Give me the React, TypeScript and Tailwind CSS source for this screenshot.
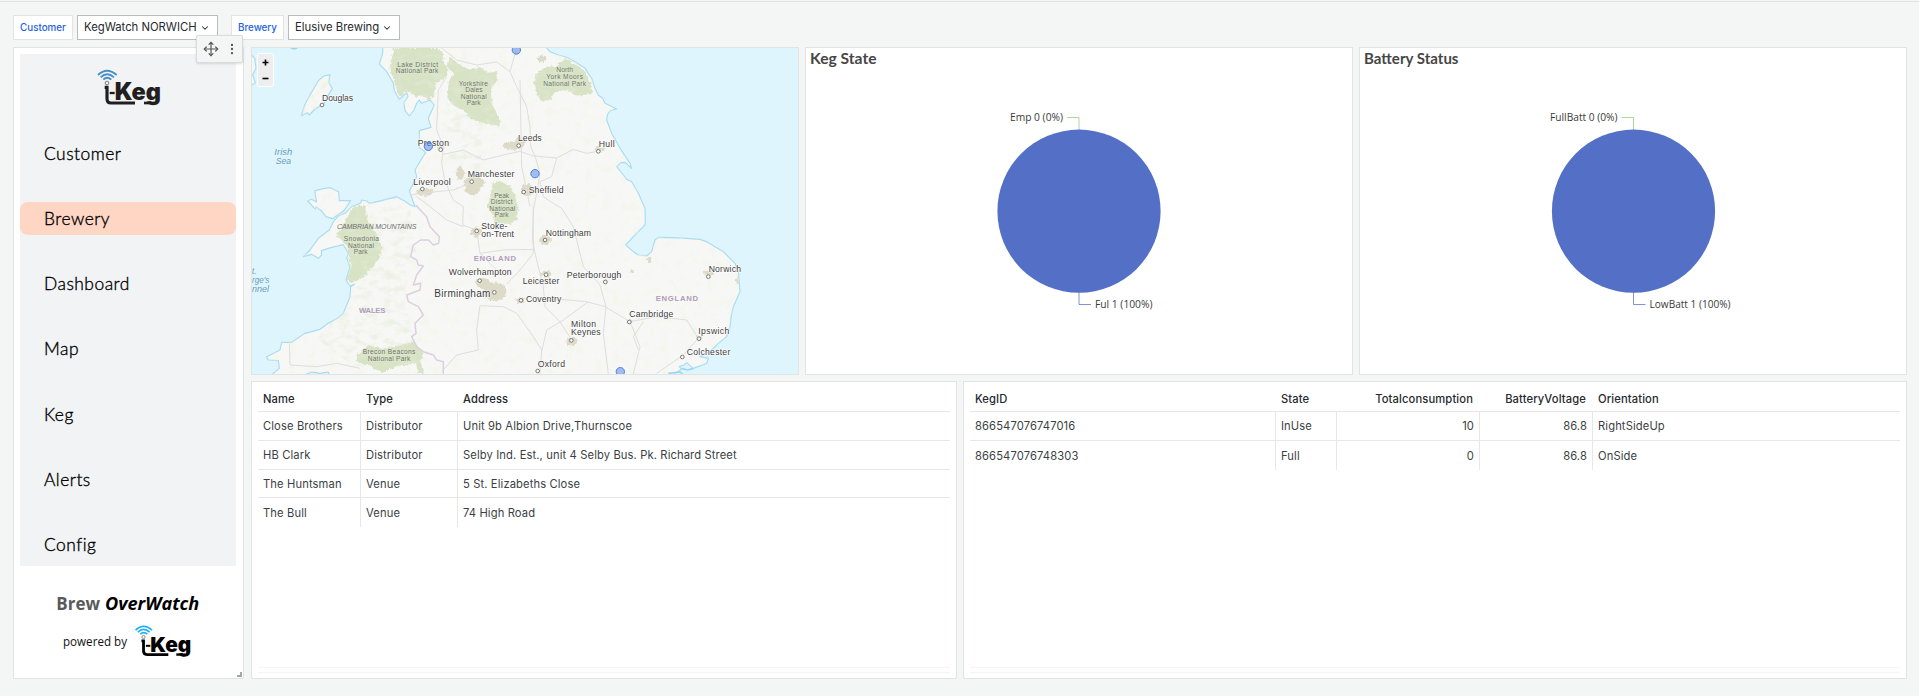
import React from "react";
import { ChevronDown, Move, EllipsisVertical } from "lucide-react";

const GOTHIC = "font-['Century_Gothic','URW_Gothic',Lato,sans-serif]";

function KegLogo({ wave, ink, className }: { wave: string; ink: string; className: string }) {
  return (
    <svg viewBox="290 207 192 108" className={className} preserveAspectRatio="none" aria-label="i-Keg">
      <g fill="none" stroke={wave} strokeWidth="5.5">
        <path d="M293 225Q320 199 349 225" />
        <path d="M301 232Q320 213 341 232" />
        <path d="M309 239Q320 228 333 239" />
      </g>
      <circle cx="320" cy="249" r="5.5" fill="none" stroke="#666" strokeWidth="2.5" />
      <path d="M313 262H320V296Q320 309 332 309H404" fill="none" stroke={ink} strokeWidth="9.5" />
      <path d="M328 279H343" stroke={ink} strokeWidth="7" />
      <text x="343" y="299" fontSize="71" fontWeight="900" fill={ink} fontFamily="Inter, sans-serif" textLength="139" lengthAdjust="spacingAndGlyphs">
        Keg
      </text>
      <path d="M431 309H462" stroke={ink} strokeWidth="8" />
    </svg>
  );
}

const NAV = ["Customer", "Brewery", "Dashboard", "Map", "Keg", "Alerts", "Config"];

function Sidebar() {
  return (
    <aside className="relative flex w-[231px] shrink-0 flex-col border border-[#e2e4e4] bg-white px-[6px] pt-[6px]">
      <nav className="flex h-[512px] w-[216px] flex-col bg-[#f1f3f5]">
        <div className="flex h-[83px] shrink-0 pl-[77px] pt-[15px]">
          <KegLogo wave="#4a90c4" ink="#231f20" className="h-[36px] w-[64px] overflow-visible" />
        </div>
        <div className="flex flex-col gap-[32.2px]">
          {NAV.map((n) => (
            <a
              key={n}
              className={`flex h-[33px] items-center pl-[24px] text-[17.4px] leading-none font-light tracking-[0.5px] text-black [-webkit-text-stroke:0.35px_black] ${GOTHIC} ${
                n === "Brewery" ? "rounded-[8px] bg-[#ffd5c4]" : ""
              }`}
            >
              {n}
            </a>
          ))}
        </div>
      </nav>
      <svg viewBox="150 368 450 200" className="mt-[27px] ml-[30px] h-[67px] w-[150px] shrink-0 overflow-visible" preserveAspectRatio="none">
        <g fontFamily="'Open Sans', sans-serif">
          <text x="169" y="420" fontSize="54" fontWeight="700" fill="#58595b" textLength="131" lengthAdjust="spacingAndGlyphs">
            Brew
          </text>
          <text x="315" y="420" fontSize="54" fontWeight="700" fontStyle="italic" fill="#000" textLength="283" lengthAdjust="spacingAndGlyphs">
            OverWatch
          </text>
          <text x="189" y="526" fontSize="38" fill="#111" textLength="192" lengthAdjust="spacingAndGlyphs">
            powered by
          </text>
        </g>
        <svg x="404" y="463" width="170" height="94" overflow="visible">
          <KegLogo wave="#1cb0f6" ink="#000" className="h-full w-full overflow-visible" />
        </svg>
      </svg>
      <svg viewBox="0 0 5 5" className="absolute right-[1px] bottom-[1px] h-[5px] w-[5px]">
        <path d="M5 0V5H0V3H3V0Z" fill="#a3a5a7" />
      </svg>
      <div className="absolute -top-[13px] right-0 flex h-[28px] w-[47px] items-center rounded-[2px] border border-[#d9dbdc] bg-[#f4f5f5] pl-[6px] text-[#55585d] shadow-sm">
        <Move size={16} strokeWidth={1.8} className="shrink-0" />
        <EllipsisVertical size={14} strokeWidth={2} className="ml-[6px] shrink-0" />
      </div>
    </aside>
  );
}

const COAST =
  "M398 10L398 40L388 72L410 95L430 130L433 152L448 178L462 165L470 158L474 170L462 188L465 212L478 228L492 210L500 190L508 180L515 190L540 180L553 195L545 212L535 235L543 262L508 272L508 322L527 338L520 348L495 390L500 410L485 440L478 452L487 478L495 500L480 494L462 482L440 470L395 482L358 490L350 483L335 480L332 489L305 500L285 520L265 528L250 545L238 570L205 595L180 630L160 650L185 643L205 655L215 645L214 632L245 622L280 614L295 640L290 655L300 680L288 720L300 738L314 733L302 740L300 770L280 820L262 835L235 850L210 868L165 880L125 907L95 907L90 930L50 950L55 960L85 962L88 985L70 1000L65 1020L1270 1020L1275 1000L1295 988L1288 980L1302 975L1310 968L1330 985L1370 970L1375 955L1350 950L1385 930L1405 910L1430 890L1440 860L1445 820L1450 800L1470 755L1465 695L1455 670L1420 635L1370 605L1350 598L1310 595L1260 593L1225 592L1215 600L1205 635L1190 648L1165 645L1150 635L1127 615L1150 590L1185 555L1186 540L1185 505L1165 460L1145 425L1130 418L1120 405L1100 380L1112 368L1125 367L1145 385L1140 370L1110 325L1085 280L1070 240L1072 225L1080 212L1100 207L1065 190L1058 175L1045 165L1035 145L1025 115L1005 85L980 68L950 52L925 45L900 35L878 10Z";
const ANGLESEY = "M195 452L220 446L240 443L266 455L268 482L302 482L282 512L262 525L248 536L228 530L214 512L198 500L196 507L184 495L173 483L184 478L200 486L196 465Z";
const MAN = "M240 104L236 128L247 145L232 170L222 190L192 210L178 225L172 218L154 227L166 190L190 148L205 122L222 108Z";

const PARKS = [
  "M432 24L560 24L582 40L580 62L595 95L582 115L558 130L552 168L532 178L515 165L500 170L470 150L450 172L440 150L432 120L418 85Z",
  "M600 52L640 80L652 90L690 82L720 100L742 92L740 120L722 150L725 190L750 240L748 258L712 252L670 240L640 212L608 195L592 170L596 125L612 100L588 78Z",
  "M890 78L920 80L945 55L978 74L1000 88L1022 130L1028 160L985 168L950 150L915 155L900 180L872 182L862 160L850 130L858 105Z",
  "M728 430L750 422L782 440L795 465L806 500L800 540L780 552L735 550L728 525L712 500L720 470Z",
  "M310 500L345 495L352 540L372 565L385 600L398 625L385 660L360 690L340 712L300 730L290 715L302 680L292 620L270 595L258 590Z",
  "M322 945L355 915L400 928L440 918L490 905L520 940L512 965L520 1002L505 998L498 970L440 978L395 998L355 975L320 965Z",
];

const URBAN: [number, number, number, number][] = [
  [788, 317, 30, 12], [812, 305, 16, 12], [672, 428, 32, 20], [630, 400, 12, 20], [668, 450, 22, 14], [525, 455, 26, 12],
  [876, 56, 13, 10], [1050, 327, 16, 7], [832, 450, 20, 18], [678, 575, 16, 16], [885, 600, 18, 14], [888, 702, 16, 10],
  [735, 755, 34, 28], [700, 730, 22, 16], [811, 780, 12, 10], [965, 905, 16, 12], [1375, 700, 14, 8], [1462, 720, 4, 14],
  [1347, 893, 10, 8], [1198, 660, 7, 9], [1138, 845, 9, 6], [1147, 694, 5, 5], [1066, 724, 8, 6], [572, 325, 10, 7],
];

const ROADS = [
  "M575 24L620 60L680 75L740 66L780 95L800 24",
  "M780 95L800 140L830 200L840 260L842 320L855 348L870 400L862 450L850 510L847 600L860 660L880 740L885 800L930 845L965 900",
  "M590 110L565 150L562 220L560 270L580 320L575 370L585 425L610 480L640 500L638 555L680 570L690 640L740 690",
  "M580 343L640 330L700 360L760 345L810 334L850 348L920 354L970 328L1010 340L1048 333",
  "M920 354L905 410L870 425L880 470L910 490L935 505",
  "M810 120L815 380L830 450L840 500",
  "M430 475L500 462L560 455L610 450L660 430",
  "M500 470L540 500L590 540L640 560",
  "M770 732L810 690L850 640L850 500",
  "M690 640L760 630L850 628",
  "M690 797L680 870L685 930L620 945L575 995",
  "M690 797L760 800L800 820L850 890L875 930L870 1002",
  "M885 782L930 778L1010 785L1065 800L1140 845L1170 920L1150 1002",
  "M935 505L970 560L1000 680L1050 735L1068 800L1060 880L1075 1002",
  "M1015 785L940 840L890 870L875 935",
  "M1140 845L1220 830L1310 840L1345 895L1300 945L1220 1000",
  "M1180 845L1150 890L1165 930",
  "M118 910L120 975L200 980L260 970L330 985",
];

// name, text x, baseline, width, font size, ring x, ring y
const PLACES: [string, number, number, number, number, number, number][] = [
  ["Douglas", 216, 183, 93, 26, 216, 195],
  ["Preston", 503, 318, 94, 26, 572, 329],
  ["Leeds", 804, 304, 71, 26, 806, 317],
  ["Hull", 1046, 321, 48, 26, 1045, 334],
  ["Manchester", 653, 410, 140, 26, 665, 425],
  ["Liverpool", 490, 434, 112, 26, 517, 447],
  ["Sheffield", 836, 458, 105, 26, 821, 456],
  ["Stoke-", 694, 566, 78, 26, 680, 573],
  ["on-Trent", 694, 591, 98, 26, 0, 0],
  ["Nottingham", 887, 588, 136, 26, 885, 600],
  ["Wolverhampton", 596, 706, 189, 26, 689, 722],
  ["Birmingham", 553, 770, 168, 30, 733, 757],
  ["Leicester", 818, 731, 110, 26, 888, 704],
  ["Coventry", 828, 786, 106, 26, 813, 781],
  ["Peterborough", 950, 713, 164, 26, 1066, 726],
  ["Norwich", 1376, 695, 97, 26, 1375, 710],
  ["Cambridge", 1138, 832, 132, 26, 1138, 846],
  ["Milton", 963, 861, 75, 26, 0, 0],
  ["Keynes", 963, 886, 89, 26, 964, 901],
  ["Ipswich", 1345, 881, 93, 26, 1347, 896],
  ["Colchester", 1310, 945, 131, 26, 1297, 951],
  ["Oxford", 863, 980, 82, 26, 863, 993],
];

const PARK_LABELS: [string, number, number, number][] = [
  ["Lake District", 503, 82, 122], ["National Park", 501, 99, 128],
  ["Yorkshire", 670, 139, 88], ["Dales", 672, 157, 52], ["National", 671, 177, 78], ["Park", 671, 196, 42],
  ["North", 944, 97, 50], ["York Moors", 944, 117, 110], ["National Park", 944, 137, 128],
  ["Peak", 755, 474, 44], ["District", 755, 493, 66], ["National", 757, 513, 78], ["Park", 755, 532, 42],
  ["Snowdonia", 334, 603, 106], ["National", 333, 623, 78], ["Park", 332, 642, 42],
  ["Brecon Beacons", 417, 943, 158], ["National Park", 417, 962, 128],
];

const WATER_LABELS: [string, number, number, number][] = [
  ["Irish", 73, 346, 54], ["Sea", 77, 372, 46], ["t.", 6, 701, 13], ["rge's", 6, 728, 52], ["nnel", 6, 757, 51],
];

const MARKERS: [number, number][] = [[799, 30], [535, 319], [855, 401], [1111, 995]];

function MapPanel() {
  return (
    <section className="relative border border-[#e2e4e4] bg-[#dff5fe]">
      <svg viewBox="6 24 1638 978" className="block h-full w-full" preserveAspectRatio="none" fontFamily="'Liberation Sans', Arial, sans-serif">
        <defs>
          <clipPath id="land">
            <path d={COAST} />
            <path d={ANGLESEY} />
            <path d={MAN} />
          </clipPath>
          <filter id="terrain" x="0" y="0" width="100%" height="100%">
            <feTurbulence type="fractalNoise" baseFrequency="0.035" numOctaves="3" seed="8" />
            <feColorMatrix values="0 0 0 0 0.89  0 0 0 0 0.92  0 0 0 0 0.82  4 0 0 0 -2.15" />
          </filter>
          <filter id="relief" x="0" y="0" width="100%" height="100%">
            <feTurbulence type="fractalNoise" baseFrequency="0.03 0.05" numOctaves="3" seed="3" />
            <feColorMatrix values="0 0 0 0 0.76  0 0 0 0 0.82  0 0 0 0 0.66  0 3.6 0 0 -1.75" />
          </filter>
          <filter id="rough" x="-10%" y="-10%" width="120%" height="120%">
            <feTurbulence type="fractalNoise" baseFrequency="0.12" numOctaves="2" seed="5" />
            <feDisplacementMap in="SourceGraphic" scale="14" xChannelSelector="R" yChannelSelector="G" />
          </filter>
          <clipPath id="hills">
            <path d="M300 495L480 500L500 640L460 770L500 920L480 990L320 985L200 900L300 780L290 640Z" />
            {PARKS.map((d) => (
              <path key={d} d={d} />
            ))}
            <path d={MAN} />
            <path d="M590 190L700 250L690 400L610 400L580 280Z" />
          </clipPath>
        </defs>
        <g stroke="#a9dcf0" strokeWidth="3.5" fill="#f7f7f5" strokeLinejoin="round">
          <path d={COAST} />
          <path d={ANGLESEY} />
          <path d={MAN} />
          <path d="M0 40L14 55L18 85L8 105L16 128L4 136L0 136Z" />
        </g>
        <g clipPath="url(#land)">
          <rect x="0" y="0" width="1650" height="1010" filter="url(#terrain)" opacity="0.7" />
          <g fill="#d8e3c6" filter="url(#rough)">
            {PARKS.map((d) => (
              <path key={d} d={d} />
            ))}
          </g>
          <g clipPath="url(#hills)">
            <rect x="0" y="0" width="1650" height="1010" filter="url(#relief)" opacity="0.45" />
          </g>
          <g fill="#dedac8" filter="url(#rough)">
            {URBAN.map(([x, y, rx, ry], i) => (
              <ellipse key={i} cx={x} cy={y} rx={rx} ry={ry} />
            ))}
          </g>
          <g fill="none" stroke="#dfdddd" strokeWidth="3" strokeLinejoin="round">
            {ROADS.map((d) => (
              <path key={d} d={d} />
            ))}
          </g>
          <path
            d="M497 495L530 530L540 560L568 590L566 610L550 615L535 600L512 600L490 615L482 650L500 660L505 675L520 678L500 705L490 735L512 730L510 750L470 765L475 785L505 800L520 825L495 850L498 880L485 890L500 920L520 935L550 945L560 960L580 965L580 1002"
            fill="none"
            stroke="#dccfe0"
            strokeWidth="4.5"
            strokeLinejoin="round"
          />
        </g>
        <path d="M165 1004L185 996L210 1000L235 996L238 1004Z" fill="#dff5fe" stroke="#9bd6ee" strokeWidth="3" />
        <path d="M1255 1000L1290 996L1300 1004M1295 985L1312 990L1330 986" fill="none" stroke="#9bd6ee" strokeWidth="5" />
        <path d="M122 24L133 27L142 24" fill="none" stroke="#9bd6ee" strokeWidth="4" />
        <g fontSize="20" fill="#66705c" textAnchor="middle" stroke="#e7eddc" strokeWidth="1.5" paintOrder="stroke">
          {PARK_LABELS.map(([t, x, y, w], i) => (
            <text key={i} x={x} y={y} textLength={w}>
              {t}
            </text>
          ))}
        </g>
        <g fontSize="25" fontStyle="italic" fill="#6a9dbb">
          {WATER_LABELS.map(([t, x, y, w]) => (
            <text key={t} x={x} y={y} textLength={w} lengthAdjust="spacingAndGlyphs">
              {t}
            </text>
          ))}
        </g>
        <text x="261" y="566" fontSize="21" fontStyle="italic" fill="#717171" textLength="238">CAMBRIAN MOUNTAINS</text>
        <g fontSize="23" fontWeight="700" fill="#b09cba">
          <text x="671" y="664" textLength="127">ENGLAND</text>
          <text x="1217" y="783" textLength="127">ENGLAND</text>
          <text x="327" y="819" textLength="79">WALES</text>
        </g>
        <g fill="#3a3a3a" stroke="#fff" strokeWidth="3" paintOrder="stroke">
          {PLACES.map(([t, x, y, w, s]) => (
            <text key={t} x={x} y={y} fontSize={s} textLength={w}>
              {t}
            </text>
          ))}
        </g>
        <g fill="#fff" stroke="#777" strokeWidth="3">
          {PLACES.filter((p) => p[5] > 0).map((p) => (
            <circle key={p[0]} cx={p[5]} cy={p[6]} r="5.5" />
          ))}
        </g>
        <g fill="#5b8ee6" fillOpacity="0.55" stroke="#4a7fe0" strokeWidth="3">
          {MARKERS.map(([x, y]) => (
            <circle key={x} cx={x} cy={y} r="12.5" />
          ))}
        </g>
      </svg>
      <div className="absolute top-[5px] left-[5px] flex h-[34px] w-[17px] flex-col items-center justify-around rounded-[2px] border border-white bg-[#eee] text-black">
        <svg viewBox="0 0 7 7" className="size-[7px]">
          <path d="M3.5 0.5V6.5M0.5 3.5H6.5" stroke="currentColor" strokeWidth="1.6" />
        </svg>
        <svg viewBox="0 0 7 7" className="size-[7px]">
          <path d="M0.5 3.5H6.5" stroke="currentColor" strokeWidth="1.6" />
        </svg>
      </div>
    </section>
  );
}

type PieProps = { title: string; titleWidth: number; cx: number; top: string; topWidth: number; bottom: string; bottomWidth: number };

function PiePanel({ title, titleWidth, cx, top, topWidth, bottom, bottomWidth }: PieProps) {
  return (
    <section className="border border-[#e2e4e4] bg-white">
      <svg className="block h-full w-full">
        <text x="4" y="15.5" fontFamily="'Century Gothic', Lato, sans-serif" fontWeight="700" fontSize="14.5" fill="#464646" textLength={titleWidth} lengthAdjust="spacingAndGlyphs">
          {title}
        </text>
        <path d={`M${cx - 11.5} 69.5H${cx + 0.5}V84`} fill="none" stroke="#91cc75" strokeOpacity="0.75" />
        <path d={`M${cx + 0.5} 243V256.5H${cx + 12.5}`} fill="none" stroke="#5470c6" strokeOpacity="0.75" />
        <circle cx={cx + 0.5} cy="163.2" r="81.6" fill="#5470c6" />
        <g fontFamily="'Open Sans', sans-serif" fontSize="11.5" fill="#3a3a3a">
          <text x={cx - 15.5 - topWidth} y="73" textLength={topWidth} lengthAdjust="spacingAndGlyphs">
            {top}
          </text>
          <text x={cx + 16.5} y="260" textLength={bottomWidth} lengthAdjust="spacingAndGlyphs">
            {bottom}
          </text>
        </g>
      </svg>
    </section>
  );
}

type Col = { label: string; width: string; right?: boolean };

function DataTable({ cols, rows }: { cols: Col[]; rows: string[][] }) {
  return (
    <section className="flex flex-col border border-[#e2e4e4] bg-white px-[6px] pt-[3px] pb-[5px] font-['Inter',sans-serif] text-[11.2px] leading-none text-[#3b3f45]">
      <div className="flex h-[27px] shrink-0 items-center border-b border-[#e6e7e8] font-medium tracking-[0.12px] text-[#24292e]">
        {cols.map((c) => (
          <div key={c.label} className={`${c.width} pt-[3px] pr-[7px] pl-[5px] ${c.right ? "text-right" : ""}`}>
            {c.label}
          </div>
        ))}
      </div>
      {rows.map((r, i) => (
        <div key={r[0]} className={`flex h-[28.8px] shrink-0 ${i < rows.length - 1 ? "border-b border-[#e6e7e8]" : ""}`}>
          {r.map((v, j) => (
            <div
              key={j}
              className={`${cols[j].width} flex items-center pt-[2px] pr-[5px] pl-[5px] tracking-[0.12px] ${j < r.length - 1 ? "border-r border-[#e6e7e8]" : ""} ${
                cols[j].right ? "justify-end" : ""
              }`}
            >
              {v}
            </div>
          ))}
        </div>
      ))}
      <div className="mt-auto h-[6px] shrink-0 border-y border-[#f5f5f5]" />
    </section>
  );
}

function Variable({ label, value, labelWidth, valueWidth }: { label: string; value: string; labelWidth: string; valueWidth: string }) {
  return (
    <div className="flex gap-[4px]">
      <div className={`flex h-[25px] items-center justify-center border border-[#e2e4e4] bg-white pt-px text-[9.8px] font-medium text-[#1f62e0] ${labelWidth}`}>
        {label}
      </div>
      <div className={`flex h-[25px] items-center justify-between border border-[#b9bcbe] bg-white pr-[7px] pl-[6px] text-[11.3px] whitespace-nowrap text-[#24292e] ${valueWidth}`}>
        {value}
        <ChevronDown size={10} strokeWidth={2.5} className="shrink-0" />
      </div>
    </div>
  );
}

export default function App() {
  return (
    <main className="flex h-[696px] w-[1919px] flex-col overflow-hidden bg-[#f4f6f5] pt-[1px] font-['Inter',sans-serif]">
      <div className="h-px shrink-0 bg-[#e0e3e2]" />
      <header className="flex h-[45px] shrink-0 gap-[13px] pt-[13px] pl-[13px]">
        <Variable label="Customer" value="KegWatch NORWICH" labelWidth="w-[60px]" valueWidth="w-[141px]" />
        <Variable label="Brewery" value="Elusive Brewing" labelWidth="w-[53px]" valueWidth="w-[112px]" />
      </header>
      <div className="flex h-[632px] gap-[7px] pl-[13px]">
        <Sidebar />
        <div className="flex w-[1656px] flex-col gap-[6px]">
          <div className="grid h-[328px] grid-cols-[548px_548px_548px] gap-[6px]">
            <MapPanel />
            <PiePanel title="Keg State" titleWidth={66.5} cx={272.5} top="Emp 0 (0%)" topWidth={53} bottom="Ful 1 (100%)" bottomWidth={57.5} />
            <PiePanel title="Battery Status" titleWidth={94.5} cx={273} top="FullBatt 0 (0%)" topWidth={67.5} bottom="LowBatt 1 (100%)" bottomWidth={81} />
          </div>
          <div className="grid h-[298px] grid-cols-[706px_944px] gap-[6px]">
            <DataTable
              cols={[
                { label: "Name", width: "w-[103px]" },
                { label: "Type", width: "w-[97px]" },
                { label: "Address", width: "flex-1" },
              ]}
              rows={[
                ["Close Brothers", "Distributor", "Unit 9b Albion Drive,Thurnscoe"],
                ["HB Clark", "Distributor", "Selby Ind. Est., unit 4 Selby Bus. Pk. Richard Street"],
                ["The Huntsman", "Venue", "5 St. Elizabeths Close"],
                ["The Bull", "Venue", "74 High Road"],
              ]}
            />
            <DataTable
              cols={[
                { label: "KegID", width: "w-[306px]" },
                { label: "State", width: "w-[61px]" },
                { label: "Totalconsumption", width: "w-[143px]", right: true },
                { label: "BatteryVoltage", width: "w-[113px]", right: true },
                { label: "Orientation", width: "flex-1" },
              ]}
              rows={[
                ["866547076747016", "InUse", "10", "86.8", "RightSideUp"],
                ["866547076748303", "Full", "0", "86.8", "OnSide"],
              ]}
            />
          </div>
        </div>
      </div>
    </main>
  );
}
